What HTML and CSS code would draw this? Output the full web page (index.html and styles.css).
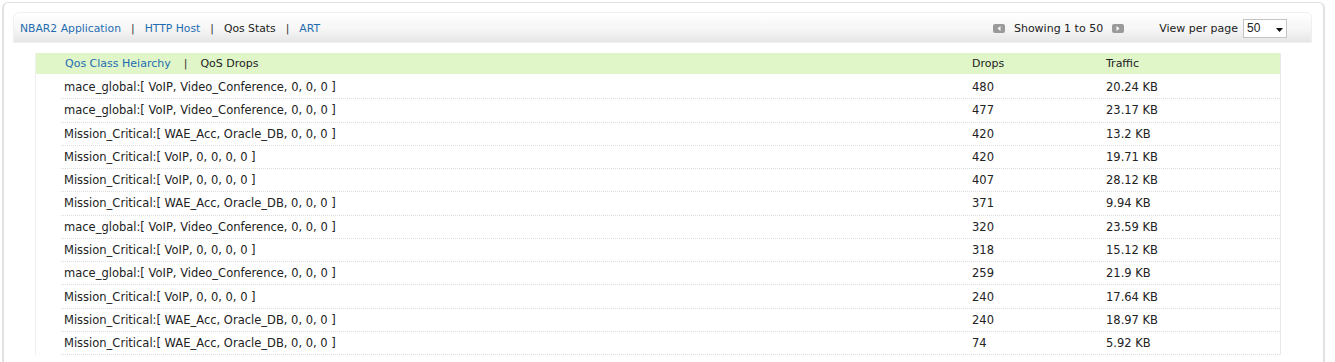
FILE: index.html
```html
<!DOCTYPE html>
<html lang="en">
<head>
    <meta charset="UTF-8">
    <title>Qos Stats</title>
    <link rel="stylesheet" href="styles.css">
</head>
<body>
    <div class="panel">
        <!-- barre d'onglets + pagination -->
        <div class="toolbar">
            <div class="tabs">
                <a href="#">NBAR2 Application</a><span class="sep">|</span><a href="#">HTTP Host</a><span class="sep">|</span><span class="current">Qos Stats</span><span class="sep">|</span><a href="#">ART</a>
            </div>
            <div class="pager">
                <span class="pg-btn"><svg width="12" height="9" viewBox="0 0 12 9"><rect width="12" height="9" rx="2" fill="#9a9a9a"/><path d="M7.5 2 L4.5 4.5 L7.5 7 Z" fill="#fff"/></svg></span>
                <span class="showing">Showing 1 to 50</span>
                <span class="pg-btn"><svg width="12" height="9" viewBox="0 0 12 9"><rect width="12" height="9" rx="2" fill="#9a9a9a"/><path d="M4.5 2 L7.5 4.5 L4.5 7 Z" fill="#fff"/></svg></span>
                <span class="per-page">View per page</span>
                <div class="select">
                    <span>50</span>
                    <svg width="7" height="4" viewBox="0 0 7 4"><path d="M0 0 H7 L3.5 4 Z" fill="#111"/></svg>
                </div>
            </div>
        </div>

        <div class="grid">
            <div class="grid-head">
                <div class="subtabs">
                    <a href="#">Qos Class Heiarchy</a><span class="sep">|</span><span class="current">QoS Drops</span>
                </div>
                <div>Drops</div>
                <div>Traffic</div>
            </div>
            <div class="row"><div>mace_global:[ VoIP, Video_Conference, 0, 0, 0 ]</div><div>480</div><div>20.24 KB</div></div>
            <div class="row"><div>mace_global:[ VoIP, Video_Conference, 0, 0, 0 ]</div><div>477</div><div>23.17 KB</div></div>
            <div class="row"><div>Mission_Critical:[ WAE_Acc, Oracle_DB, 0, 0, 0 ]</div><div>420</div><div>13.2 KB</div></div>
            <div class="row"><div>Mission_Critical:[ VoIP, 0, 0, 0, 0 ]</div><div>420</div><div>19.71 KB</div></div>
            <div class="row"><div>Mission_Critical:[ VoIP, 0, 0, 0, 0 ]</div><div>407</div><div>28.12 KB</div></div>
            <div class="row"><div>Mission_Critical:[ WAE_Acc, Oracle_DB, 0, 0, 0 ]</div><div>371</div><div>9.94 KB</div></div>
            <div class="row"><div>mace_global:[ VoIP, Video_Conference, 0, 0, 0 ]</div><div>320</div><div>23.59 KB</div></div>
            <div class="row"><div>Mission_Critical:[ VoIP, 0, 0, 0, 0 ]</div><div>318</div><div>15.12 KB</div></div>
            <div class="row"><div>mace_global:[ VoIP, Video_Conference, 0, 0, 0 ]</div><div>259</div><div>21.9 KB</div></div>
            <div class="row"><div>Mission_Critical:[ VoIP, 0, 0, 0, 0 ]</div><div>240</div><div>17.64 KB</div></div>
            <div class="row"><div>Mission_Critical:[ WAE_Acc, Oracle_DB, 0, 0, 0 ]</div><div>240</div><div>18.97 KB</div></div>
            <div class="row"><div>Mission_Critical:[ WAE_Acc, Oracle_DB, 0, 0, 0 ]</div><div>74</div><div>5.92 KB</div></div>
        </div>
    </div>
</body>
</html>
```

FILE: styles.css
```css
html, body {
    height: 362px;
    overflow: hidden;
}

body {
    margin: 0;
    font-family: "DejaVu Sans", Verdana, sans-serif;
    font-size: 11px;
    color: #222;
    background: #fff;
}

a {
    color: #1f6cb0;
    text-decoration: none;
}

/* Cadre principal */
.panel {
    margin: 2px 0 0 2px;
    width: 1299px;
    height: 360px;
    border: 1px solid #e2e2e2;
    border-left: 2px solid #e2e2e2;
    border-right: 2px solid #e2e2e2;
    border-radius: 6px;
    padding: 9px 11px 0 9px;
}

/* Barre du haut */
.toolbar {
    display: flex;
    justify-content: space-between;
    align-items: center;
    height: 28px;
    padding: 1px 24px 0 6px;
    border: 1px solid #f0f0f0;
    border-radius: 6px 6px 0 0;
    background: linear-gradient(#ffffff, #f6f6f6 55%, #e6e6e6);
}

.tabs {
    font-size: 10.8px;
}

.tabs .sep {
    margin: 0 10px;
    color: #333;
}

.pager {
    display: flex;
    align-items: center;
}

.pg-btn {
    display: flex;
}

.showing {
    margin: 0 9px 0 9px;
}

.per-page {
    margin-left: 35px;
    margin-right: 5px;
}

.select {
    display: flex;
    align-items: center;
    justify-content: space-between;
    width: 36px;
    height: 17px;
    padding: 0 3px 0 3px;
    border: 1px solid #c4c4c4;
    background: #fff;
    font-family: "Liberation Sans", Arial, sans-serif;
    font-size: 12px;
}

.select svg {
    margin-top: 3px;
}

/* Tableau */
.grid {
    margin: 10px 0 0 22px;
    width: 1244px;
    border-left: 1px solid #f0f0f0;
    border-right: 1px solid #e8e8e8;
    font-size: 11.5px;
}

.grid-head {
    display: grid;
    grid-template-columns: 907px 134px 1fr;
    align-items: center;
    height: 21px;
    padding-bottom: 2px;
    padding-left: 29px;
    background: linear-gradient(#e0f6c9 21px, #fff 21px);
    font-size: 11px;
}

.subtabs .sep {
    margin: 0 13px;
    color: #333;
}

.row {
    display: grid;
    grid-template-columns: 908px 134px 1fr;
    align-items: center;
    height: 22.27px;
    margin-left: 25px;
    padding-left: 3px;
    border-bottom: 1px dotted #dcdcdc;
}
```
